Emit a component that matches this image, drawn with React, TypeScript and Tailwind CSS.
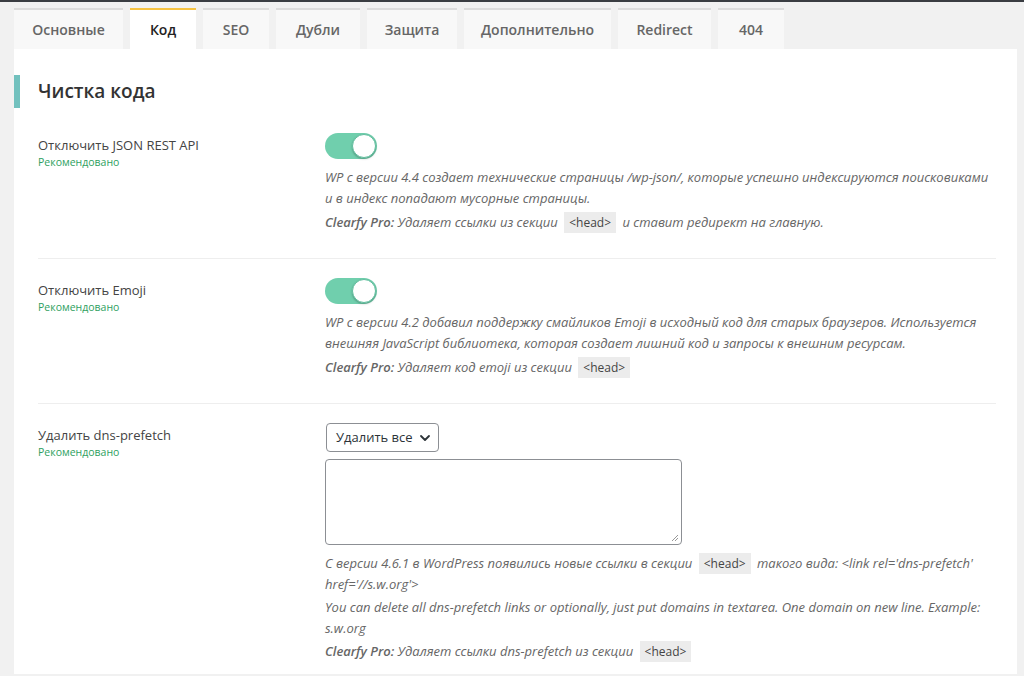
import React from "react";

const tabs = [
  { name: "Основные", w: "w-[109px]" },
  { name: "Код", w: "w-[66px]", active: true },
  { name: "SEO", w: "w-[66px]" },
  { name: "Дубли", w: "w-[84px]" },
  { name: "Защита", w: "w-[90px]" },
  { name: "Дополнительно", w: "w-[147px]" },
  { name: "Redirect", w: "w-[93px]" },
  { name: "404", w: "w-[66px]" },
];

const Head = () => (
  <code className="mx-[3px] inline-block bg-[#ececec] px-[5px] font-['Open_Sans',sans-serif] text-[12px] not-italic leading-[21px] text-[#444]">
    &lt;head&gt;
  </code>
);

const Toggle = () => (
  <div className="flex h-[26px] w-[52px] items-center justify-end rounded-full bg-[#70cfad] pr-[1px]">
    <div className="h-[24px] w-[24px] rounded-full border border-[#5fbf9e] bg-white shadow-[0_1px_2px_rgba(0,0,0,0.25)]" />
  </div>
);

function Row({
  label,
  control,
  children,
  first,
  last,
}: {
  label: string;
  control: React.ReactNode;
  children: React.ReactNode;
  first?: boolean;
  last?: boolean;
}) {
  return (
    <div
      className={`flex ${first ? "pt-[25px]" : "pt-[19px]"} ${
        last ? "pb-[12px]" : "border-b border-[#eeeeee] pb-[25px]"
      }`}
    >
      <div className="w-[287px] shrink-0 pt-[3px]">
        <p className="text-[13px] leading-[18px] text-[#444]">{label}</p>
        <p className="text-[10.5px] leading-[16px] text-[#2f9f5f]">Рекомендовано</p>
      </div>
      <div className="flex-1">
        {control}
        <div className="text-[13px] italic leading-[21px] text-[#666]">{children}</div>
      </div>
    </div>
  );
}

export default function App() {
  return (
    <div className="min-h-[676px] w-full border-t-2 border-[#3a3d42] bg-[#f1f1f1] pl-[14px] pr-[7px] font-['Open_Sans',sans-serif]">
      <div className="mt-[6px] flex gap-[7px]">
        {tabs.map((t) => (
          <div
            key={t.name}
            className={`flex h-[41px] items-center justify-center border-t-2 text-[14px] ${t.w} ${
              t.active
                ? "border-[#f6c342] bg-white font-semibold text-[#222]"
                : "border-[#dcdcdc] bg-[#f8f8f8] font-semibold text-[#666]"
            }`}
          >
            {t.name}
          </div>
        ))}
      </div>

      <div className="bg-white pt-[26px] pr-[21px]">
        <div className="flex items-center">
          <div className="h-[33px] w-[6px] bg-[#72c1be]" />
          <h2 className="ml-[18px] text-[19px] font-semibold text-[#333]">Чистка кода</h2>
        </div>

        <div className="pl-[24px]">
          <Row first label="Отключить JSON REST API" control={<Toggle />}>
            <p className="mt-[8px]">
              WP с версии 4.4 создает технические страницы /wp-json/, которые успешно индексируются поисковиками
              и в индекс попадают мусорные страницы.
            </p>
            <p className="mt-[3px]">
              <b className="font-semibold">Clearfy Pro:</b> Удаляет ссылки из секции <Head /> и ставит редирект на
              главную.
            </p>
          </Row>

          <Row label="Отключить Emoji" control={<Toggle />}>
            <p className="mt-[8px]">
              WP с версии 4.2 добавил поддержку смайликов Emoji в исходный код для старых браузеров. Используется
              внешняя JavaScript библиотека, которая создает лишний код и запросы к внешним ресурсам.
            </p>
            <p className="mt-[3px]">
              <b className="font-semibold">Clearfy Pro:</b> Удаляет код emoji из секции <Head />
            </p>
          </Row>

          <Row
            last
            label="Удалить dns-prefetch"
            control={
              <div className="flex flex-col gap-[7px]">
                <div className="ml-[1px] flex h-[29px] w-[113px] items-center justify-between rounded-[4px] border border-[#8c8f94] pl-[9px] pr-[7px] text-[13px] not-italic text-[#2c3338]">
                  <span>Удалить все</span>
                  <svg width="12" height="12" viewBox="0 0 12 12" fill="none">
                    <path d="M2 4l4 4 4-4" stroke="#2c3338" strokeWidth="1.8" strokeLinecap="round" strokeLinejoin="round" />
                  </svg>
                </div>
                <div className="relative h-[86px] w-[357px] rounded-[4px] border border-[#8c8f94]">
                  <svg className="absolute right-[2px] bottom-[2px]" width="8" height="8" viewBox="0 0 8 8">
                    <path d="M7 1L1 7M7 4L4 7" stroke="#999" strokeWidth="1" />
                  </svg>
                </div>
              </div>
            }
          >
            <p className="mt-[8px]">
              С версии 4.6.1 в WordPress появились новые ссылки в секции <Head /> такого вида: &lt;link
              rel='dns-prefetch' href='//s.w.org'&gt;
            </p>
            <p className="mt-[2px]">
              You can delete all dns-prefetch links or optionally, just put domains in textarea. One domain on new
              line. Example: s.w.org
            </p>
            <p className="mt-[2px]">
              <b className="font-semibold">Clearfy Pro:</b> Удаляет ссылки dns-prefetch из секции <Head />
            </p>
          </Row>
        </div>
      </div>
    </div>
  );
}
